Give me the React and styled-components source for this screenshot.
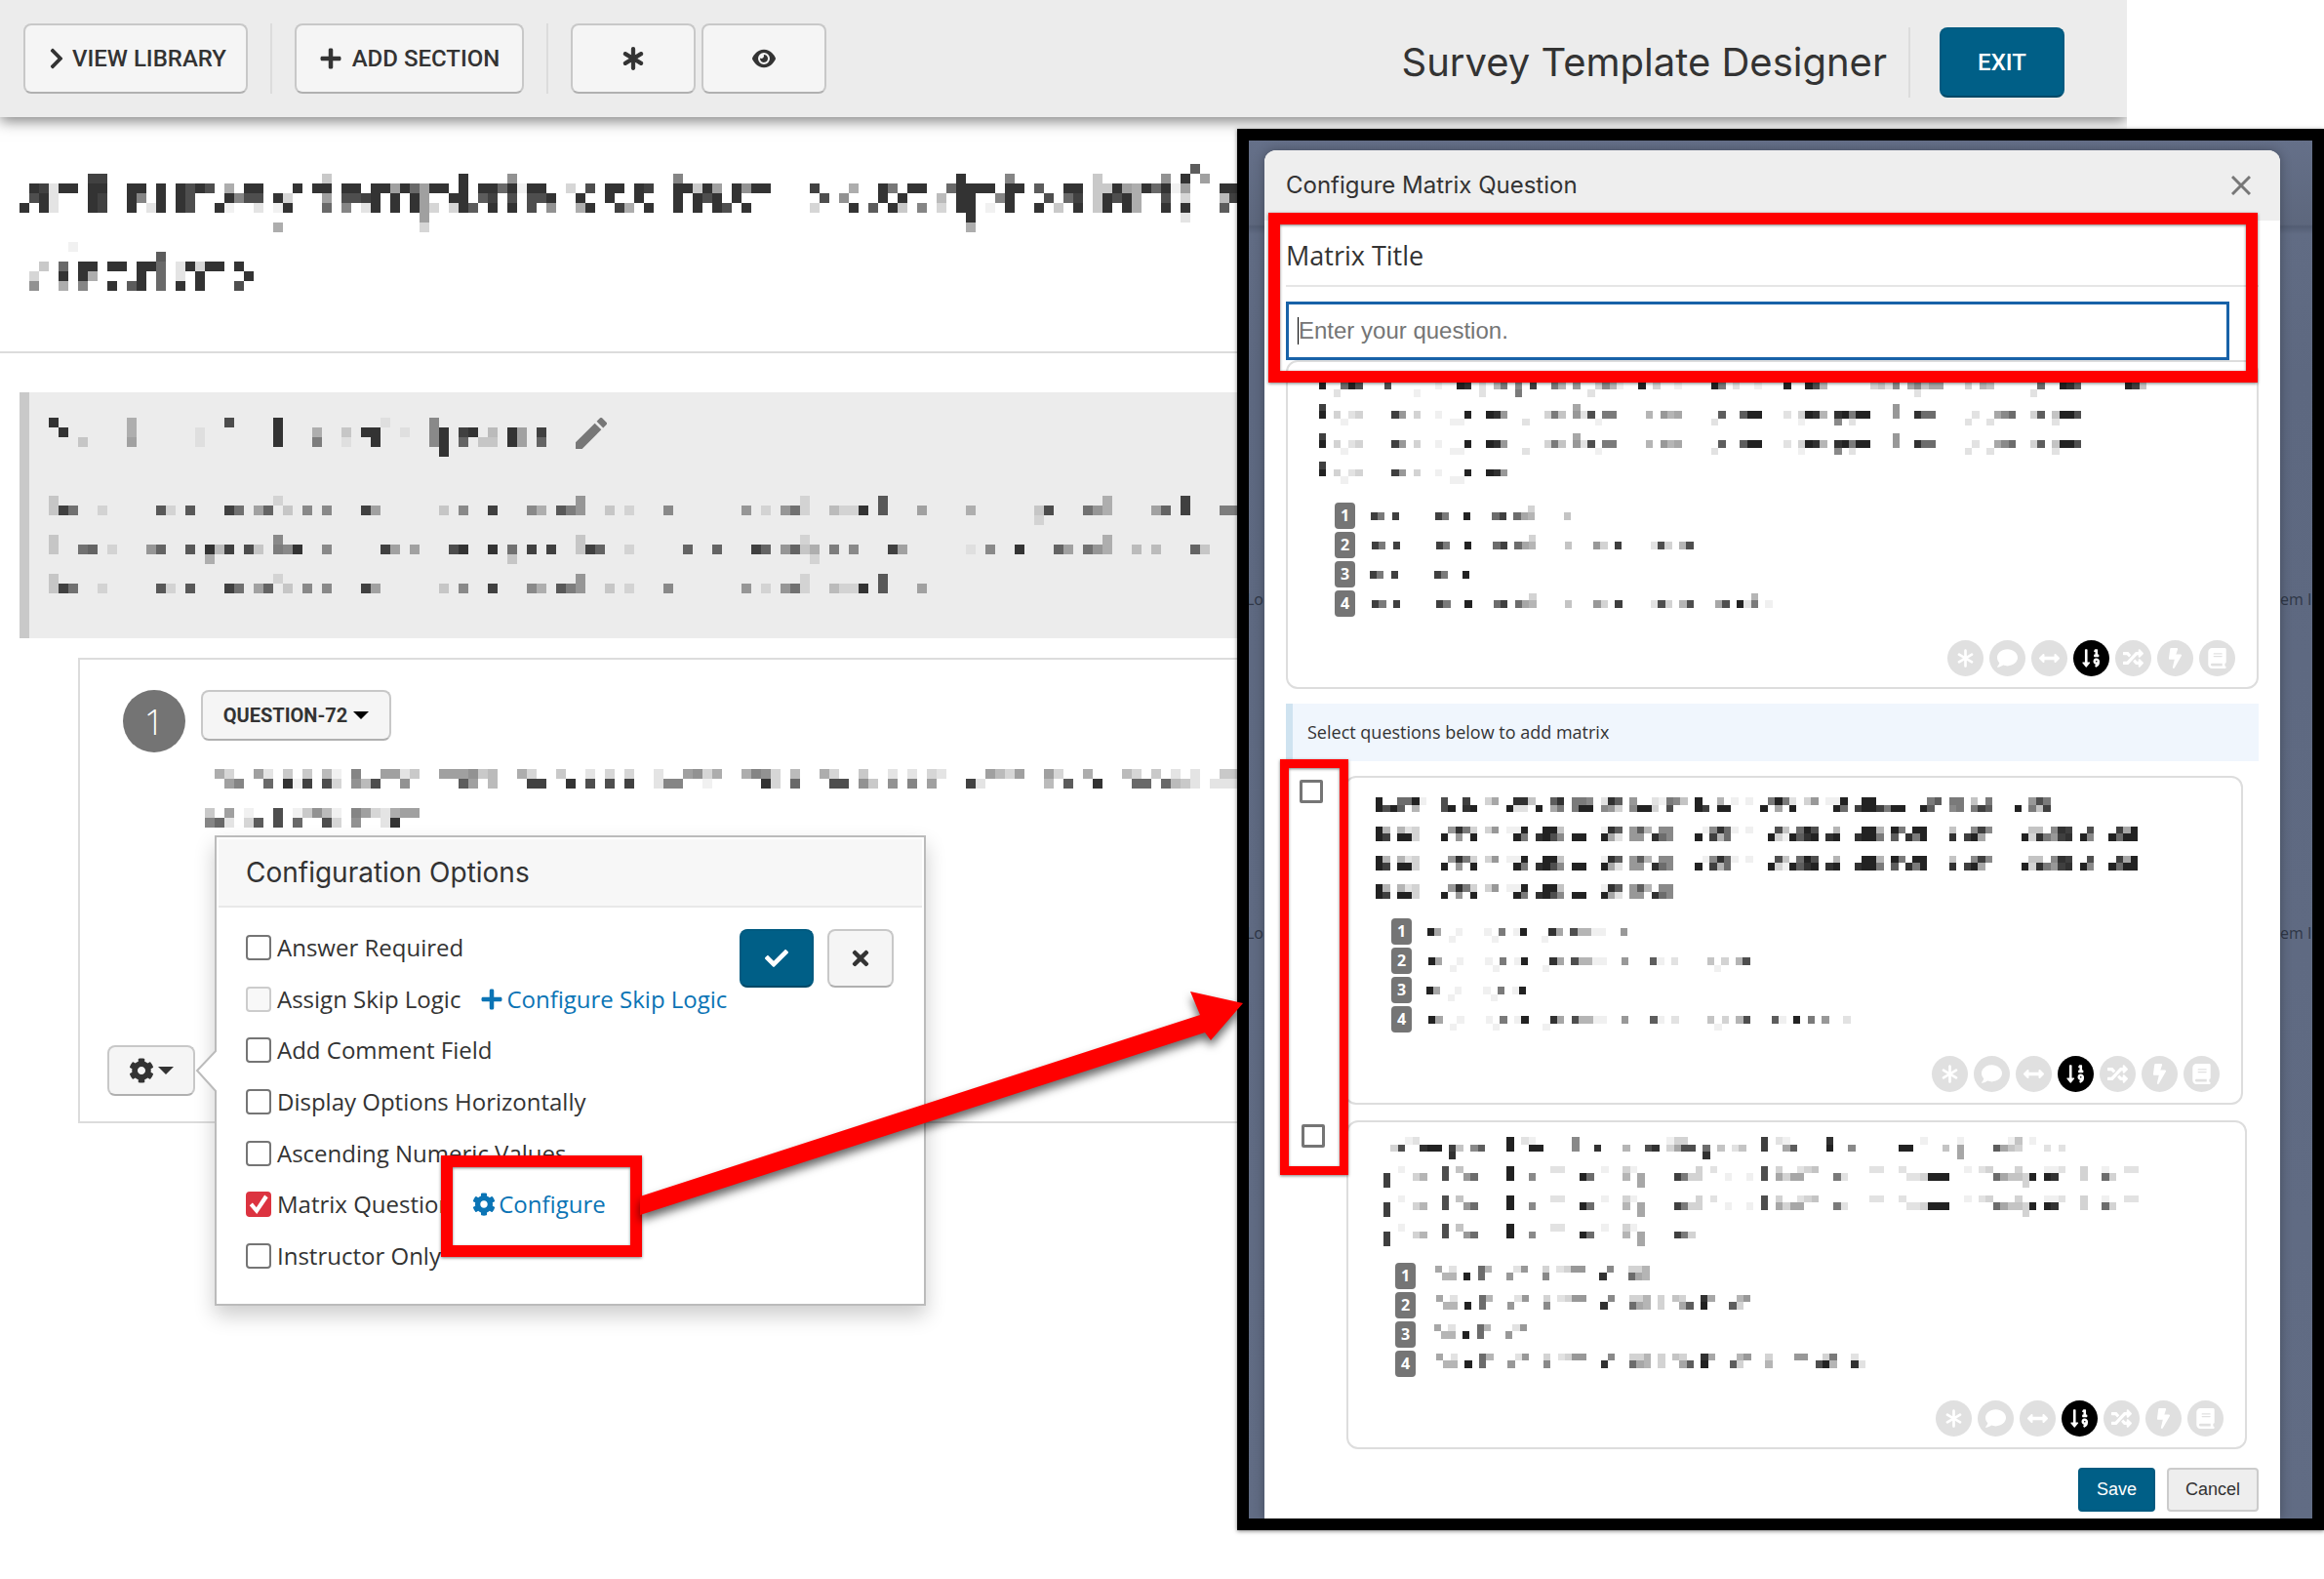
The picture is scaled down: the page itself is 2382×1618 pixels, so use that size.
import { useState } from "react";
import styled, { createGlobalStyle, css } from "styled-components";
import { FaAsterisk, FaEye, FaBook } from "react-icons/fa6";
import {
	FaArrowsAltH, FaBolt, FaCheck, FaChevronRight, FaCog, FaComment, FaPlus, FaRandom, FaSortNumericDown, FaTimes,
} from "react-icons/fa";

const sans = `"Open Sans", "Noto Sans", sans-serif`;
const heading = `Inter, "Open Sans", sans-serif`;
const label = `Roboto, "Open Sans", sans-serif`;
const plain = `"Liberation Sans", Arial, sans-serif`;

// Redacted copy. Every run is "row,col,shades": one hex digit per cell, f is darkest.
const TITLE = `
1,9,ee 1,33,4 1,47,f 2,3,fe2ff 2,9,ff 2,13,ff 2,16,f 2,18,fdfd 2,23,6 2,25,ff 2,30,f 2,32,ff 2,35,ff 2,38,ff7fb7ff 2,47,f 2,49,ffb
3,3,df2 3,9,fe 3,13,f9 3,16,f 3,18,fd 3,23,f9dd 3,28,f3 3,33,7 3,35,ddef 3,40,f 3,42,f7 3,46,ff 3,49,ce
4,2,f 4,4,f2 4,9,fe 4,13,f 4,15,2f 4,18,fd 4,22,f1 4,26,2 4,28,1f 4,33,b 4,35,9 4,37,2f 4,40,f 4,42,f73 4,46,3fc 4,50,f
5,43,7 6,28,6 6,43,3 0,122,c 1,52,8 1,69,9 1,98,f 1,103,9 1,112,4 1,119,8 1,121,f 1,123,7
2,52,f1ff 2,58,3 2,60,d 2,62,ff 2,65,fe 2,69,ff4f7 2,75,f8ff 2,83,e 2,87,6 2,90,fa 2,93,ff 2,97,bffff 2,103,ff 2,106,c 2,109,ff 2,112,44f76fbf17 2,125,ff
3,52,d 3,54,ddf 3,59,f 3,62,f 3,65,f 3,69,f 3,71,fdf 3,75,f 3,84,d 3,86,8 3,90,f 3,92,f 3,96,5 3,98,ff 3,102,9f 3,107,d 3,109,be 3,112,4fdf6 3,119,d 3,121,3 3,125,5e
4,52,f 4,54,d 4,56,8 4,59,6f 4,63,e6 4,66,f 4,69,f 4,71,f 4,73,fd 4,76,f 4,83,3 4,87,f 4,89,c 4,91,f4 4,94,9 4,96,3 4,98,ff 4,101,1 4,103,f 4,106,f 4,108,4 4,110,f 4,112,4f 4,115,f6 4,119,f 4,121,f 4,125,c
5,99,f 5,121,2 6,99,6
8,7,1 9,16,c 10,4,4 10,6,b 10,8,ff 10,11,ff 10,14,ffb 10,18,2f3ff 10,24,f
11,3,3 11,6,f 11,8,f6 11,14,f 11,16,b 11,18,2 11,20,f 11,25,f
12,3,8 12,6,6 12,8,9 12,11,f 12,13,cf 12,16,b 12,18,f 12,20,f 12,24,d`;

const SECTION_NAME = `
0,5,f 0,13,5 0,23,d 0,28,f 0,39,1 0,44,8 1,6,f 1,13,5 1,20,1 1,28,f 1,32,5 1,35,3 1,37,ff 1,41,1 1,44,8f 1,47,ef 1,50,4 1,52,f6 1,55,e
2,8,3 2,13,6 2,20,1 2,28,f 2,32,9 2,35,1 2,38,f 2,44,8f 2,47,b 2,49,33 2,52,f6 2,55,b 3,45,f`;

const bodyLine = row => `
${row},5,3 ${row},28,2 ${row},59,7 ${row},82,2 ${row},90,c
${row + 1},5,3ea ${row + 1},10,2 ${row + 1},16,c2 ${row + 1},19,c ${row + 1},23,ea ${row + 1},26,6b ${row + 1},29,3 ${row + 1},31,8 ${row + 1},33,8
${row + 1},37,e6 ${row + 1},45,3 ${row + 1},47,8 ${row + 1},50,e ${row + 1},54,85 ${row + 1},57,c97 ${row + 1},62,3 ${row + 1},64,2 ${row + 1},68,8
${row + 1},76,7 ${row + 1},78,2 ${row + 1},80,7a2 ${row + 1},85,422f ${row + 1},90,c ${row + 1},94,6`;

const SECTION_BODY = `${bodyLine(0)} 0,113,5 0,121,e 1,99,5 1,106,3d 1,111,a75 1,118,6b 1,121,e 1,125,99 2,106,2
4,5,3 4,28,8 4,59,3 4,82,2 4,113,5
5,5,3 5,8,ab 5,11,2 5,15,7b 5,19,c 5,21,f4e 5,25,d3 5,28,98f 5,33,8 5,39,e6 5,42,6 5,46,df 5,50,f 5,52,a 5,54,e 5,56,e 5,59,3eb 5,64,2
5,70,b 5,73,b 5,77,eb 5,80,7b35 5,85,9 5,87,8 5,91,e6 5,99,1 5,101,8 5,104,f 5,108,b6 5,111,a75 5,116,4 5,118,4 5,122,b3
6,21,5 6,52,3 6,83,2 ${bodyLine(8)}`;

const QUESTION = `
0,22,63 0,26,72 0,29,4 0,31,4 0,33,51 0,36,9 0,39,7724 0,45,777845 0,53,63 0,57,4 0,60,2 0,62,3 0,64,3 0,67,2 0,70,7836 0,76,6983 0,81,5
0,84,63 0,88,4 0,91,2 0,93,2 0,95,32 0,101,7537 0,107,73 0,111,6 0,115,53 0,118,4 0,120,2 0,122,2 0,125,44
1,23,79 1,27,b 1,29,f1e 1,33,d3 1,36,85d 1,41,8 1,47,c7 1,50,5 1,54,ee 1,58,f 1,60,d 1,62,d 1,64,e 1,67,299 1,72,1 1,78,f3 1,81,b
1,85,dd 1,88,84 1,91,8 1,93,9 1,95,7 1,99,e2 1,107,5 1,109,c 1,112,f 1,116,bb 1,119,b542 1,124,222
4,21,4 4,23,7 4,25,1 4,28,d 4,30,14851 4,36,9732677 5,21,9b2 5,25,3c 5,28,d 5,30,b 5,33,d3 5,36,8 5,39,2f`;

// Moves a one line pattern down by a number of rows, and cuts it after lastCol.
const shift = (runs, by, lastCol = 999) => runs.trim().split(/\s+/)
	.map(run => run.split(","))
	.filter(([, col]) => Number(col) <= lastCol)
	.map(([row, col, shades]) => `${Number(row) + by},${col},${shades}`)
	.join(" ");

const FIRST_LINE = `
0,0,d 0,35,6 0,79,7 1,0,f 1,2,3 1,4,23 1,10,d7 1,13,3 1,16,1 1,20,f 1,23,fe7 1,31,394 1,35,72c 1,39,99 1,45,5 1,47,756 1,55,b 1,58,bff 1,64,2
1,66,3fe5 1,71,ef9ff 1,79,7 1,82,eaa 1,90,2 1,93,68a 1,98,3b 1,101,4ffc
2,3,1 2,18,11 2,28,2 2,38,1 2,54,2 2,66,1 2,71,8 2,73,2 2,89,2 2,92,2 2,101,2`;

const FIRST = `
1,0,f 1,3,afc 1,9,c 1,16,1 1,19,fe 1,22,2 1,24,59 1,27,8 1,29,d 1,32,95 1,35,7 1,38,3851 1,44,f 1,46,3 1,49,1 1,54,f9 1,57,2 1,60,1 1,64,f
1,67,fc5 1,76,342 1,79,8 1,81,68466 1,89,3 1,91,54 1,99,a 1,102,feb 1,111,fd4 2,2,2 2,13,1 2,22,2 2,27,9 2,37,2 2,82,2 2,98,2
${shift(FIRST_LINE, 4)} ${shift(FIRST_LINE, 8)} ${shift(FIRST_LINE, 12, 25)}`;

const SECOND_LINE = `
0,0,f5 0,3,523 0,10,7e93 0,15,37 0,18,11f 0,23,ff4 0,31,1eb 0,35,7b5 0,39,88 0,45,18ea1 0,51,1 0,55,c4 0,58,afc 0,63,5 0,67,ff5
0,71,f9 0,74,ff 0,79,4 0,82,8d8 0,90,44 0,93,8ed 0,98,c 0,102,d6f
1,0,fd 1,3,ff3 1,9,f 1,11,7 1,13,f 1,19,f9 1,22,efc8 1,27,ff 1,31,f62 1,35,77 1,38,ea8 1,44,f 1,46,d5a 1,54,f31fbef 1,62,ef 1,66,eff9
1,71,b 1,73,e9f 1,79,e 1,81,df6 1,89,f3e97de 1,97,f8 1,101,faff`;

const SECOND = `
0,0,f 0,3,aaf1 0,9,c 0,12,d 0,15,36 0,19,ee4 0,24,be 0,27,998 0,31,2eb 0,35,7 0,38,21984 0,44,f 0,47,5 0,49,1 0,51,1 0,54,9f92 0,59,37
0,62,11f 0,67,ff 0,76,9b 0,79,99 0,82,4 0,84,9 0,90,7c9
1,0,fcfb 1,5,5 1,9,cf 1,12,ef 1,18,f22 1,22,f 1,24,69 1,27,9ff 1,31,873 1,35,8ff3 1,40,c 1,44,fd 1,47,ff 1,53,f 1,55,6 1,57,f 1,63,fa
1,66,dffd9 1,71,ff 1,75,fb 1,79,89 1,82,9db 1,88,f 1,90,94d
${shift(SECOND_LINE, 4)} ${shift(SECOND_LINE, 8)} ${shift(SECOND_LINE, 12, 39)}`;

const THIRD_LINE = `
0,2,1 0,8,c 0,10,4 0,17,f 0,23,22 0,30,1 0,33,31 0,43,3 0,45,2 0,52,c 0,54,3 0,57,234 0,67,22 0,71,2 0,80,1 0,82,23 0,87,3 0,91,112 0,96,3 0,99,1 0,102,22
1,0,d 1,4,35 1,8,c 1,11,7a 1,17,f 1,20,8 1,27,fa 1,33,5 1,35,6 1,40,d93 1,43,3 1,47,1 1,50,1 1,52,c 1,54,6366 1,62,92 1,72,223fff 1,84,a6443f 1,91,fe 1,96,3 1,99,a3
2,0,d 2,35,6 2,88,3`;

const THIRD = `
0,3,12 0,17,f 0,19,21 0,26,8 0,39,133 0,52,d 0,54,21 0,61,e 0,74,1 0,79,1 0,86,14 0,89,1
1,1,3c 1,5,eff 1,9,d4 1,12,8b 1,17,f 1,20,ff 1,26,8 1,29,e 1,33,5 1,36,ce 1,39,36cc 1,44,a 1,46,4 1,48,24 1,52,d 1,55,6b 1,61,f 1,64,8
1,71,ff 1,77,4 1,79,6 1,84,b643 1,91,2 1,93,2 2,9,e 2,44,e 2,79,6
${shift(THIRD_LINE, 4)} ${shift(THIRD_LINE, 8)} ${shift(THIRD_LINE, 12, 42)}`;

const OPTIONS_A = `0,22,3 0,53,5 1,0,d9 1,3,d 1,9,d9 1,13,f 1,17,ad 1,20,a65 1,27,4 1,31,73 1,34,d 1,39,2c3 1,43,5c 1,48,6c 1,51,f29 1,55,1`;
const OPTIONS_B = `1,0,f6 1,4,1 1,8,1 1,10,9 1,12,1f 1,17,e6 1,20,c5511 1,27,7 1,31,b1 1,34,2 1,39,4 1,41,3 1,43,5c 1,48,b1 1,51,f 1,53,9 1,55,7 1,58,2 2,3,1 2,9,1 2,16,1 2,40,1`;
const OPTIONS_C = `
0,0,6 0,2,2 0,6,a5 0,11,27 0,15,3 0,17,2377 0,24,8 0,27,335 0,31,3 0,33,43 0,37,e6 0,42,57 0,46,3 0,50,77 0,54,39 0,58,2
1,1,55 1,4,f 1,6,a 1,10,7 1,15,8 1,23,e 1,27,a65 1,31,3 1,34,6b 1,37,f 1,41,b3 1,46,5 1,53,cf5 1,58,e2`;

const OPTION_ENDS = [30, 45, 14, 60];

const TAGS = [
	["Required", FaAsterisk], ["Comment", FaComment], ["Horizontal", FaArrowsAltH], ["Ascending", FaSortNumericDown],
	["Shuffle", FaRandom], ["Skip logic", FaBolt], ["Instructor", FaBook],
];

function Mosaic ({ runs, from = 0, cols, rows, cell }) {
	const cells = runs.trim().split(/\s+/).flatMap(run => {
		const [row, col, shades] = run.split(",");
		return [...shades].map((shade, i) => ({ x: Number(col) + i, y: Number(row), shade: parseInt(shade, 16) / 15 }));
	}).filter(({ x }) => x >= from && x < from + cols);

	return (
		<MosaicSvg
			viewBox={`${from} 0 ${cols} ${rows}`}
			width={Math.round(cols * cell)}
			height={Math.round(rows * cell)}
			shapeRendering="crispEdges"
			aria-hidden="true"
		>
			{cells.map(({ x, y, shade }, i) => <rect key={i} x={x} y={y} width="1" height="1" opacity={shade} />)}
		</MosaicSvg>
	)
}

function MatrixCard ({ text, options, variant }) {
	return (
		<Card $variant={variant}>
			<CardText>
				<Mosaic runs={text} cols={114} rows={15} cell={7.44} />
			</CardText>
			<OptionList $variant={variant}>
				{OPTION_ENDS.map((end, i) => (
					<li key={end}>
						<Badge>{i + 1}</Badge>
						<Mosaic runs={options} cols={end} rows={3} cell={7.44} />
					</li>
				))}
			</OptionList>
			<TagRow>
				{TAGS.map(([name, Icon]) => <Tag key={name} title={name} $on={name === "Ascending"}><Icon /></Tag>)}
			</TagRow>
		</Card>
	)
}

function ConfigurationPopover () {
	const [options, setOptions] = useState({ matrix: true });
	const toggle = name => setOptions({ ...options, [name]: !options[name] });

	const rows = [
		{ name: "required", text: "Answer Required" },
		{ name: "skip", text: "Assign Skip Logic", disabled: true, link: <><FaPlus />Configure Skip Logic</> },
		{ name: "comment", text: "Add Comment Field" },
		{ name: "horizontal", text: "Display Options Horizontally" },
		{ name: "ascending", text: "Ascending Numeric Values" },
		{ name: "matrix", text: "Matrix Question", link: <><FaCog />Configure</> },
		{ name: "instructor", text: "Instructor Only" },
	];

	return (
		<Popover>
			<PopoverArrow viewBox="0 0 22 44"><path d="M22 0 L2 21 L22 43" /></PopoverArrow>
			<PopoverTitle>Configuration Options</PopoverTitle>
			<PopoverBody>
				<OptionRows>
					{rows.map(({ name, text, disabled, link }) => (
						<OptionRow key={name}>
							<label>
								<CheckBox
									type="checkbox"
									checked={!!options[name]}
									disabled={disabled}
									onChange={() => toggle(name)}
								/>
								{text}
							</label>
							{link && <a href="#configure">{link}</a>}
						</OptionRow>
					))}
				</OptionRows>
				<PopoverActions>
					<Button $primary $width={76} $height={60} aria-label="Apply"><FaCheck /></Button>
					<Button $width={68} $height={60} aria-label="Close"><FaTimes /></Button>
				</PopoverActions>
			</PopoverBody>
		</Popover>
	)
}

function MatrixDialog () {
	return (
		<Dialog>
			<DialogHead>
				<h2>Configure Matrix Question</h2>
				<CloseButton aria-label="Close">
					<svg viewBox="0 0 20 20"><path d="M1 1 L19 19 M19 1 L1 19" /></svg>
				</CloseButton>
			</DialogHead>
			<DialogBody>
				<FieldTitle htmlFor="matrix-title">Matrix Title</FieldTitle>
				<FieldRow>
					<Caret />
					<input id="matrix-title" placeholder="Enter your question." />
				</FieldRow>
				<MatrixCard text={FIRST} options={OPTIONS_A} variant="first" />
				<Info>Select questions below to add matrix</Info>
				<Candidate>
					<CheckBox type="checkbox" $square aria-label="Add second question" />
					<MatrixCard text={SECOND} options={OPTIONS_B} variant="second" />
				</Candidate>
				<Candidate $wide>
					<CheckBox type="checkbox" $square aria-label="Add third question" />
					<MatrixCard text={THIRD} options={OPTIONS_C} variant="third" />
				</Candidate>
			</DialogBody>
			<DialogFoot>
				<FootButton $primary>Save</FootButton>
				<FootButton>Cancel</FootButton>
			</DialogFoot>
			<Callout $left={4} $top={64} $width={1014} $height={174} $line={12} />
			<Callout $left={16} $top={624} $width={70} $height={426} $line={9} />
		</Dialog>
	)
}

export default function App () {
	return (
		<Page>
			<GlobalStyle />
			<Toolbar>
				<Button $width={230} $height={72} $tight><FaChevronRight />VIEW LIBRARY</Button>
				<Divider />
				<Button $width={235} $height={72}><FaPlus />ADD SECTION</Button>
				<Divider />
				<ButtonPair>
					<Button $width={128} $height={72} aria-label="Required"><BoldAsterisk /></Button>
					<Button $width={128} $height={72} aria-label="Preview"><FaEye /></Button>
				</ButtonPair>
				<ToolbarEnd>
					<h1>Survey Template Designer</h1>
					<Divider />
					<Button $primary $width={128} $height={72}>EXIT</Button>
				</ToolbarEnd>
			</Toolbar>
			<Workspace>
				<Editor>
					<TitleBlock><Mosaic runs={TITLE} cols={127} rows={15} cell={10} /></TitleBlock>
					<Section>
						<SectionName>
							<Mosaic runs={SECTION_NAME} from={5} cols={51} rows={4} cell={10} />
							<Pencil viewBox="3 3 18 18">
								<path d="M3 17.25V21h3.75L17.81 9.94l-3.75-3.75L3 17.25z" />
								<path d="M20.71 7.04a1 1 0 0 0 0-1.41l-2.34-2.34a1 1 0 0 0-1.41 0l-1.83 1.83 3.75 3.75 1.83-1.83z" />
							</Pencil>
						</SectionName>
						<Mosaic runs={SECTION_BODY} from={5} cols={122} rows={11} cell={10} />
					</Section>
					<Question>
						<QuestionNumber>1</QuestionNumber>
						<QuestionMain>
							<Button $width={195} $height={52} $small>QUESTION-72<DownMark $dark /></Button>
							<Mosaic runs={QUESTION} from={21} cols={106} rows={6} cell={10} />
						</QuestionMain>
						<GearSpot>
							<Button $width={90} $height={52} $tight aria-label="Options"><FaCog /><DownMark /></Button>
						</GearSpot>
					</Question>
				</Editor>
				<Inset>
					<Backdrop><span>Lo</span><span>Lo</span></Backdrop>
					<MatrixDialog />
					<Backdrop><span>em I</span><span>em I</span></Backdrop>
				</Inset>
				<ConfigurationPopover />
				<Callout $left={452} $top={1064} $width={206} $height={104} $line={12} />
				<Arrow viewBox="0 0 640 260">
					<path d="M6 206 L580 20 L570 -4 L624 8 L591 46 L585 38 L6 225 Z" />
				</Arrow>
			</Workspace>
		</Page>
	)
}

const GlobalStyle = createGlobalStyle`
	* {
		box-sizing: border-box;
	}

	body {
		margin: 0;
		background: #fff;
		color: #333;
		font-family: ${sans};
	}

	h1, h2, p, ul, ol {
		margin: 0;
		padding: 0;
		font-weight: 400;
	}
`;

const Page = styled.div`
	min-height: 100vh;
	overflow: hidden;
`;

const Toolbar = styled.header`
	display: flex;
	align-items: center;
	gap: 23px;
	height: 120px;
	margin-right: 202px;
	padding: 0 64px 0 24px;
	background: #ececec;
	box-shadow: 0 4px 14px rgba(0, 0, 0, 0.5);
	clip-path: inset(0 0 -30px 0);
`;

const ToolbarEnd = styled.div`
	display: flex;
	align-items: center;
	gap: 22px;
	margin-left: auto;
	padding-top: 8px;

	h1 {
		font-family: ${heading};
		font-size: 40px;
		line-height: 56px;
		white-space: nowrap;
	}

	button {
		margin-left: 8px;
	}
`;

const Divider = styled.span`
	width: 2px;
	height: 72px;
	background: #dcdcdc;
`;

const ButtonPair = styled.div`
	display: flex;
	gap: 6px;
`;

const Button = styled.button`
	display: inline-flex;
	align-items: center;
	justify-content: center;
	flex-shrink: 0;
	gap: ${props => props.$tight ? 4 : 10}px;
	width: ${props => props.$width}px;
	height: ${props => props.$height}px;
	padding: 0;
	border: 2px solid #c8c8c8;
	border-bottom-color: #b0b0b0;
	border-radius: 8px;
	background: #f5f5f5;
	color: #333;
	font-family: ${label};
	font-size: 24px;
	font-weight: 500;

	${props => props.$small && css`
		gap: 6px;
		font-size: 20px;
		font-weight: 700;
	`}

	${props => props.$primary && css`
		border-color: #005a80;
		border-bottom-color: #004866;
		background: #005f87;
		color: #fff;
	`}
`;

const BoldAsterisk = styled(FaAsterisk)`
	width: 26px;
	height: 26px;
	stroke: currentColor;
	stroke-width: 20;
`;

const DownMark = styled.span`
	border: 8px solid transparent;
	border-top-color: ${props => props.$dark ? "#000" : "#333"};
	border-bottom-width: 0;
`;

const Workspace = styled.div`
	position: relative;
	display: grid;
	grid-template-columns: minmax(0, 1268fr) minmax(0, 1114fr);
	align-items: start;
`;

const MosaicSvg = styled.svg`
	display: block;
	flex-shrink: 0;
	fill: #222;
	overflow: hidden;
`;

const Editor = styled.main`
	overflow: hidden;
	padding-top: 48px;

	${MosaicSvg} {
		fill: #333;
	}
`;

const TitleBlock = styled.div`
	padding-bottom: 42px;
	border-bottom: 2px solid #dcdcdc;
`;

const Section = styled.section`
	margin: 40px 0 20px 20px;
	padding: 26px 0 36px 20px;
	border-left: 10px solid #c9c9c9;
	background: #ececec;
`;

const SectionName = styled.div`
	display: flex;
	align-items: flex-start;
	gap: 30px;
	margin-bottom: 40px;
`;

const Pencil = styled.svg`
	width: 32px;
	height: 32px;
	fill: #777;
`;

const Question = styled.section`
	display: grid;
	grid-template-columns: 64px 1fr;
	column-gap: 16px;
	margin-left: 80px;
	padding: 31px 0 26px 44px;
	border: 2px solid #dcdcdc;
	border-right: 0;
`;

const QuestionNumber = styled.span`
	display: grid;
	place-items: center;
	width: 64px;
	height: 64px;
	border-radius: 50%;
	background: #747474;
	color: #fff;
	font-size: 36px;
	font-weight: 300;
`;

const QuestionMain = styled.div`
	> svg {
		margin: 29px 0 0 4px;
	}
`;

const GearSpot = styled.div`
	grid-column: 1 / -1;
	margin: 223px 0 0 -16px;

	svg {
		width: 26px;
		height: 26px;
	}
`;

const Popover = styled.div`
	position: absolute;
	top: 736px;
	left: 220px;
	width: 729px;
	height: 482px;
	padding: 2px;
	border: 2px solid #bbb;
	background: #fff;
	box-shadow: 0 10px 20px rgba(0, 0, 0, 0.2);
`;

const PopoverArrow = styled.svg`
	position: absolute;
	top: 218px;
	left: -22px;
	width: 22px;
	height: 44px;
	fill: #fff;
	stroke: #bbb;
	stroke-width: 2;
`;

const PopoverTitle = styled.h2`
	height: 70px;
	padding: 14px 28px;
	border-bottom: 2px solid #e8e8e8;
	background: #f7f7f7;
	font-family: ${heading};
	font-size: 28px;
	line-height: 40px;
`;

const PopoverBody = styled.div`
	display: flex;
	justify-content: space-between;
	padding: 22px 28px;
`;

const OptionRows = styled.ul`
	display: flex;
	flex-direction: column;
	justify-content: space-between;
	height: 350px;
	margin-top: 2px;
	list-style: none;
`;

const OptionRow = styled.li`
	display: flex;
	align-items: center;
	gap: 20px;
	font-size: 24px;
	line-height: 34px;
	white-space: nowrap;

	label, a {
		display: flex;
		align-items: center;
		gap: 6px;
	}

	a {
		gap: 3px;
		color: #0b74b5;
		text-decoration: none;
	}
`;

const CheckBox = styled.input`
	appearance: none;
	flex-shrink: 0;
	width: ${props => props.$square ? 24 : 26}px;
	height: ${props => props.$square ? 24 : 26}px;
	margin: 0;
	border: ${props => props.$square ? 3 : 2}px solid #757575;
	border-radius: ${props => props.$square ? 2 : 4}px;
	background: #fff;

	&:disabled {
		border-color: #ccc;
		background: #f8f8f8;
	}

	&:checked {
		border-color: #dc3340;
		background: #dc3340;
	}

	&:checked::before {
		content: "";
		display: block;
		height: 100%;
		background: #fff;
		clip-path: polygon(8% 54%, 22% 42%, 40% 64%, 78% 6%, 94% 18%, 42% 94%);
	}
`;

const PopoverActions = styled.div`
	display: flex;
	gap: 14px;
	margin-right: 1px;
`;

const Callout = styled.div`
	position: absolute;
	left: ${props => props.$left}px;
	top: ${props => props.$top}px;
	width: ${props => props.$width}px;
	height: ${props => props.$height}px;
	border: ${props => props.$line}px solid #f00;
	box-shadow: 0 1px 3px rgba(0, 0, 0, 0.5), inset 0 1px 3px rgba(0, 0, 0, 0.5);
	pointer-events: none;
`;

const Arrow = styled.svg`
	position: absolute;
	left: 650px;
	top: 900px;
	width: 640px;
	height: 260px;
	overflow: visible;
	fill: #f00;
	filter: drop-shadow(0 6px 5px rgba(0, 0, 0, 0.6));
	pointer-events: none;
`;

const Inset = styled.aside`
	position: relative;
	display: grid;
	grid-template-columns: 16px minmax(0, 1fr) 33px;
	margin-top: 12px;
	border: 12px solid #000;
	background: linear-gradient(#657089, #5d677d 86px, #535d73 88px, #616c84 96px, #5d6880 240px, #616c84);
	box-shadow: 0 1px 4px rgba(0, 0, 0, 0.5);
`;

const Backdrop = styled.div`
	display: flex;
	flex-direction: column;
	gap: 318px;
	padding-top: 458px;
	overflow: hidden;
	color: #2f3747;
	font-size: 16px;
	line-height: 24px;
	white-space: nowrap;

	&:first-child span {
		margin-left: -3px;
	}
`;

const Dialog = styled.div`
	position: relative;
	margin-top: 10px;
	border-radius: 12px 12px 0 0;
	background: #fff;
	box-shadow: 0 0 12px rgba(0, 0, 0, 0.3);
`;

const DialogHead = styled.header`
	display: flex;
	align-items: center;
	justify-content: space-between;
	height: 72px;
	padding: 0 30px 0 22px;
	border-radius: 12px 12px 0 0;
	background: #eee;

	h2 {
		font-family: ${heading};
		font-size: 24px;
		line-height: 36px;
	}
`;

const CloseButton = styled.button`
	padding: 0;
	border: 0;
	background: none;

	svg {
		display: block;
		width: 20px;
		height: 20px;
		stroke: #777;
		stroke-width: 3;
	}
`;

const DialogBody = styled.div`
	padding: 0 22px;
`;

const FieldTitle = styled.label`
	display: block;
	padding: 20px 0 14px;
	border-bottom: 2px solid #e5e5e5;
	font-size: 27px;
	line-height: 32px;
`;

const FieldRow = styled.div`
	position: relative;
	padding: 15px 30px 0 0;

	input {
		display: block;
		width: 100%;
		height: 60px;
		padding: 0 10px;
		border: 3px solid #1862a8;
		color: #333;
		font-family: ${plain};
		font-size: 24px;
	}

	input::placeholder {
		color: #757575;
	}
`;

const Caret = styled.span`
	position: absolute;
	left: 12px;
	top: 31px;
	width: 1px;
	height: 28px;
	background: #000;
`;

const cardPadding = {
	first: "13px 22px 11px 32px",
	second: "20px 22px 11px 30px",
	third: "15px 22px 11px 36px",
};

const Card = styled.article`
	flex-grow: 1;
	padding: ${props => cardPadding[props.$variant]};
	border: 2px solid #ddd;
	border-radius: 12px;
	background: #fff;
`;

const CardText = styled.div`
	overflow: hidden;
`;

const optionMargin = {
	first: "19px 0 24px 16px",
	second: "12px 0 24px 16px",
	third: "17px 0 24px 12px",
};

const OptionList = styled.ol`
	display: flex;
	flex-direction: column;
	gap: 3px;
	margin: ${props => optionMargin[props.$variant]};
	list-style: none;

	li {
		display: flex;
		align-items: center;
		gap: ${props => props.$variant === "third" ? 18 : 14}px;
		height: 27px;
	}
`;

const Badge = styled.span`
	width: 21px;
	height: 27px;
	border-radius: 4px;
	background: #757575;
	color: #fff;
	font-size: 16px;
	font-weight: 700;
	line-height: 27px;
	text-align: center;
`;

const TagRow = styled.div`
	display: flex;
	justify-content: flex-end;
	gap: 6px;
`;

const Tag = styled.span`
	display: grid;
	place-items: center;
	width: 37px;
	height: 37px;
	border-radius: 50%;
	background: ${props => props.$on ? "#000" : "#e0e0e0"};
	color: #fff;
	font-size: 21px;
`;

const Info = styled.p`
	margin: 15px 0;
	padding: 17px 15px 18px;
	border-left: 7px solid #cfe3f0;
	background: #f0f6fd;
	font-size: 18px;
	line-height: 24px;
`;

const Candidate = styled.div`
	display: flex;
	align-items: flex-start;
	gap: 22px;
	margin-bottom: 16px;
	padding: 0 ${props => props.$wide ? "12px 0 16px" : "16px 0 14px"};

	> input {
		margin-top: 4px;
	}
`;

const DialogFoot = styled.footer`
	display: flex;
	justify-content: flex-end;
	gap: 12px;
	padding: 3px 22px 7px;
`;

const FootButton = styled.button`
	height: 45px;
	padding: 0 17px;
	border: 2px solid ${props => props.$primary ? "#005a80" : "#ccc"};
	border-radius: 4px;
	background: ${props => props.$primary ? "#005f87" : "#eee"};
	color: ${props => props.$primary ? "#fff" : "#333"};
	font-family: ${plain};
	font-size: 18px;
`;
